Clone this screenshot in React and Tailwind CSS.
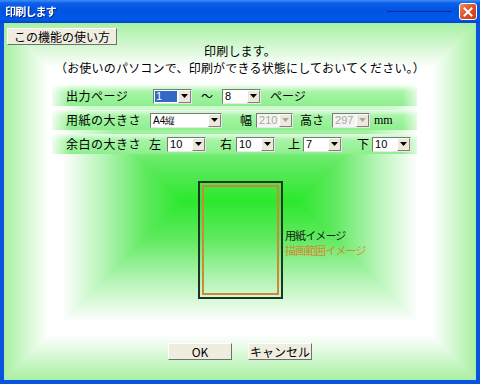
import React from "react"

const jp = "font-['Noto_Sans_CJK_JP','Noto_Sans_CJK_SC',sans-serif]"
const num = "font-['Liberation_Sans','DejaVu_Sans',sans-serif]"

// classic combo box with a drop arrow
const Combo = ({ value, width, selected, disabled, small }) => (
  <div
    className={`flex h-[15px] items-stretch border border-t-[#7a7a7a] border-l-[#7a7a7a] border-r-[#e8e8e8] border-b-[#e8e8e8] ${disabled ? "bg-[#f4f4f0]" : "bg-white"} ${width}`}
  >
    <div className="flex flex-1 items-center pl-[1px]">
      <span
        className={`${small ? "text-[10px]" : "text-[11px]"} ${num} leading-[11px] px-[1px] ${
          selected ? "bg-[#316ac5] text-white w-[22px]" : disabled ? "text-[#a8a8a8]" : "text-black"
        }`}
      >
        {value}
      </span>
    </div>
    <div className="flex w-[13px] items-center justify-center bg-[#ece9d8] border border-t-white border-l-white border-r-[#808080] border-b-[#808080]">
      <svg width="7" height="4" viewBox="0 0 7 4">
        <path d="M0 0h7L3.5 4z" fill={disabled ? "#a8a8a8" : "#000"} />
      </svg>
    </div>
  </div>
)

const Btn = ({ children, className = "" }) => (
  <button
    className={`h-[17px] bg-[#efede0] border border-t-white border-l-white border-r-[#707070] border-b-[#707070] text-[12px] leading-[14px] text-black ${jp} ${className}`}
  >
    {children}
  </button>
)

const band =
  "h-[20px] flex items-center pl-[14px] bg-[linear-gradient(to_right,rgba(255,255,255,0.85),rgba(255,255,255,0)_5%,rgba(255,255,255,0)_96%,rgba(255,255,255,0.7)),linear-gradient(to_bottom,#e6fde6,#a6f4a6_30%,#8eef8e)]"

// box-shaped gradient: two inner layers lightened together, two outer layers darkened on top
const clientBg =
  "bg-[linear-gradient(to_right,#a6f0a2_0px,#ffffff_45px,#ffffff_427px,#a6f0a2_472px),linear-gradient(to_bottom,#a6f0a2_0px,#ffffff_45px,#ffffff_312px,#a6f0a2_357px),linear-gradient(to_right,#ffffff_0px,#ffffff_58px,#b4f4b4_100px,#62ea62_140px,#2ce82c_178px,#2ce82c_294px,#62ea62_332px,#b4f4b4_372px,#ffffff_414px,#ffffff_472px),linear-gradient(to_bottom,#ffffff_0px,#ffffff_58px,#b4f4b4_100px,#62ea62_140px,#2ce82c_178px,#62ea62_217px,#b4f4b4_257px,#ffffff_299px,#ffffff_357px)] [background-blend-mode:darken,darken,lighten,normal]"

export default function App() {
  return (
    <div className="w-[480px] h-[384px] bg-[#0a52e0] flex flex-col overflow-hidden">
      {/* title bar */}
      <div className="h-[23px] flex items-center bg-[linear-gradient(to_bottom,#3f8ef8_0%,#0b5fe8_14%,#0054e3_45%,#0058ea_85%,#0044c8_100%)]">
        <span className={`ml-[5px] text-[11px] tracking-[-0.8px] font-bold text-white ${jp} drop-shadow-[1px_1px_0_#0a2a80]`}>
          印刷します
        </span>
        <div className="flex-1" />
        <div className="w-[65px] h-px bg-[#0a2c9c] mt-[-1px]" />
        <div className="ml-[7px] mr-[3px] w-[18px] h-[17px] rounded-[3px] border border-white bg-[linear-gradient(135deg,#f08a60,#de4c22_55%,#c83a14)] flex items-center justify-center">
          <svg width="10" height="10" viewBox="0 0 10 10">
            <path d="M1.5 1.5l7 7M8.5 1.5l-7 7" stroke="#fff" strokeWidth="2" strokeLinecap="square" />
          </svg>
        </div>
      </div>

      {/* client area */}
      <div className={`mx-[4px] h-[357px] flex flex-col ${jp} text-black ${clientBg}`}>
        <div className="pt-[5px] pl-[3px] flex">
          <Btn className="w-[110px]">この機能の使い方</Btn>
        </div>

        <div className="mt-[-3px] text-center text-[12px] leading-[17px] tracking-[0.2px]">
          <div>印刷します。</div>
          <div>（お使いのパソコンで、印刷ができる状態にしておいてください。）</div>
        </div>

        {/* option rows */}
        <div className="mt-[10px] ml-[48px] w-[365px] flex flex-col gap-[4px] text-[12px]">
          <div className={band}>
            <span className="w-[87px] tracking-[0.5px]">出力ページ</span>
            <Combo value="1" width="w-[39px]" selected />
            <span className="w-[30px] text-center">～</span>
            <Combo value="8" width="w-[39px]" />
            <span className="ml-[9px]">ページ</span>
          </div>
          <div className={band}>
            <span className="w-[84px] tracking-[0.5px]">用紙の大きさ</span>
            <Combo value="A4縦" width="w-[72px]" small />
            <span className="ml-[18px]">幅</span>
            <div className="ml-[4px]">
              <Combo value="210" width="w-[37px]" disabled />
            </div>
            <span className="ml-[7px]">高さ</span>
            <div className="ml-[8px]">
              <Combo value="297" width="w-[38px]" disabled />
            </div>
            <span className="ml-[4px] text-[12px] font-['Liberation_Serif',serif]">mm</span>
          </div>
          <div className={band}>
            <span className="w-[83px] tracking-[0.5px]">余白の大きさ</span>
            <span>左</span>
            <div className="ml-[6px]">
              <Combo value="10" width="w-[39px]" />
            </div>
            <span className="ml-[14px]">右</span>
            <div className="ml-[4px]">
              <Combo value="10" width="w-[39px]" />
            </div>
            <span className="ml-[13px]">上</span>
            <div className="ml-[3px]">
              <Combo value="7" width="w-[39px]" />
            </div>
            <span className="ml-[15px]">下</span>
            <div className="ml-[3px]">
              <Combo value="10" width="w-[39px]" />
            </div>
          </div>
        </div>

        {/* paper preview */}
        <div className="mt-[27px] ml-[194px] flex items-start">
          <div className="w-[85px] h-[118px] border-2 border-[#1e3424] p-[2px]">
            <div className="w-full h-full border-2 border-[#c98a3c]" />
          </div>
          <div className="ml-[2px] mt-[47px] text-[11px] tracking-[-0.9px] leading-[15px]">
            <div className="text-[#102010]">用紙イメージ</div>
            <div className="text-[#d48a30]">描画範囲イメージ</div>
          </div>
        </div>

        {/* buttons */}
        <div className="mt-[44px] flex justify-center gap-[16px]">
          <Btn className={`w-[64px] ${num}`}>OK</Btn>
          <Btn className="w-[64px]">キャンセル</Btn>
        </div>
      </div>
    </div>
  )
}
